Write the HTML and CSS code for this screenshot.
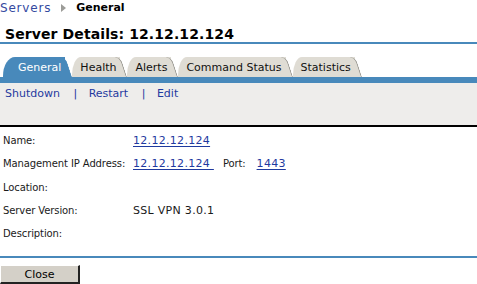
FILE: index.html
```html
<!DOCTYPE html>
<html lang="en">
<head>
    <meta charset="UTF-8">
    <title>Server Details</title>
    <link rel="stylesheet" href="styles.css">
</head>
<body>
    <div class="crumbs">
        <a class="crumb-link" href="#">Servers</a>
        <span class="crumb-arrow"></span>
        <span class="crumb-current">General</span>
    </div>

    <h1 class="page-title">Server Details: 12.12.12.124</h1>

    <!-- tabs -->
    <div class="tabs">
        <span class="tab active">General</span>
        <span class="tab">Health</span>
        <span class="tab">Alerts</span>
        <span class="tab">Command Status</span>
        <span class="tab">Statistics</span>
    </div>
    <div class="tab-bar"></div>

    <div class="actions">
        <a href="#">Shutdown</a>
        <span class="sep">|</span>
        <a href="#">Restart</a>
        <span class="sep">|</span>
        <a href="#">Edit</a>
    </div>

    <div class="details">
        <span class="label">Name:</span>
        <span class="value"><a href="#">12.12.12.124</a></span>

        <span class="label">Management IP Address:</span>
        <span class="value"><a href="#">12.12.12.124&nbsp;</a><span class="label port-label">Port:</span><a href="#">1443</a></span>

        <span class="label">Location:</span>
        <span class="value"></span>

        <span class="label">Server Version:</span>
        <span class="value">SSL VPN 3.0.1</span>

        <span class="label">Description:</span>
        <span class="value"></span>
    </div>

    <div class="footer">
        <button class="close-btn">Close</button>
    </div>
</body>
</html>
```

FILE: styles.css
```css
:root {
    --blue: #4889bb;
    --tab-gray: #dfdcd4;
    --panel-gray: #eeedeb;
    --link: #1f3a9f;
}

body {
    margin: 0;
    font-family: 'DejaVu Sans', sans-serif;
    font-size: 11px;
    color: #1a1a1a;
    background: #fff;
}

a {
    color: var(--link);
    text-decoration: none;
}

/* breadcrumb */
.crumbs {
    display: flex;
    align-items: center;
    height: 14px;
    line-height: 14px;
    padding-top: 1px;
}

.crumb-link {
    font-size: 12px;
    letter-spacing: 0.8px;
    color: #34499f;
}

.crumb-arrow {
    width: 0;
    height: 0;
    margin: 0 10px 0 10px;
    border-top: 4px solid transparent;
    border-bottom: 4px solid transparent;
    border-left: 5px solid #9c9c98;
}

.crumb-current {
    font-weight: bold;
    color: #000;
}

.page-title {
    margin: 11px 0 0;
    padding: 0 5px;
    font-size: 14px;
    line-height: 16px;
    letter-spacing: 0.1px;
    color: #000;
    border-bottom: 2px solid var(--blue);
}

/* tabs */
.tabs {
    display: flex;
    height: 20px;
    margin-top: 13px;
    padding-left: 3px;
}

.tab {
    position: relative;
    z-index: 1;
    height: 18px;
    padding: 2px 4px 0 8px;
    margin-right: 7px;
    line-height: 18px;
    color: #111;
    background: var(--tab-gray);
    border-top-left-radius: 9px 18px;
}

.tab::after {
    content: "";
    position: absolute;
    z-index: -1;
    top: 0;
    bottom: 0;
    left: calc(100% - 4px);
    width: 10px;
    background: inherit;
    border-right: 1px solid #8e8d87;
    border-top-right-radius: 6px;
    transform: skewX(18deg);
    transform-origin: bottom left;
}

.tab.active {
    padding-left: 15px;
    color: #fff;
    background: var(--blue);
    border-top-left-radius: 12px 19px;
}

.tab.active::after {
    border-right-color: var(--blue);
}

.tab-bar {
    height: 6px;
    background: var(--blue);
}

/* action links */
.actions {
    height: 38px;
    padding: 4px 0 0 5px;
    line-height: 14px;
    background: var(--panel-gray);
    border-bottom: 2px solid #000;
}

.actions .sep {
    margin: 0 8px 0 10px;
    color: var(--link);
}

/* detail rows */
.details {
    display: grid;
    grid-template-columns: 130px 1fr;
    grid-auto-rows: 23.25px;
    padding: 2px 0 11px 3px;
    border-bottom: 2px solid var(--blue);
}

.label {
    font-size: 10px;
    letter-spacing: -0.1px;
    line-height: 23.25px;
}

.value {
    line-height: 23.25px;
    letter-spacing: 0.3px;
}

.value a {
    text-decoration: underline;
    text-underline-offset: 2px;
}

.port-label {
    margin: 0 11px 0 9px;
}

/* footer */
.footer {
    padding-top: 7px;
}

.close-btn {
    width: 80px;
    height: 19px;
    padding: 0;
    font-family: 'DejaVu Sans', sans-serif;
    font-size: 11px;
    color: #000;
    background: #d4d0c8;
    border: none;
    border-right: 2px solid #222;
    border-bottom: 2px solid #222;
    border-top: 1px solid #fff;
    border-left: 1px solid #fff;
}
```
